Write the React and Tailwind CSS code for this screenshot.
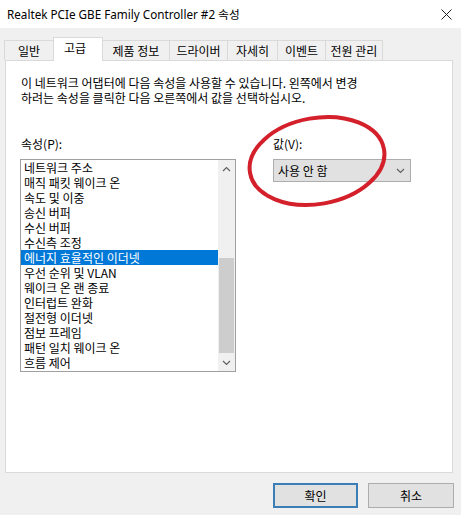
import React from "react";

const items = [
  "네트워크 주소",
  "매직 패킷 웨이크 온",
  "속도 및 이중",
  "송신 버퍼",
  "수신 버퍼",
  "수신측 조정",
  "에너지 효율적인 이더넷",
  "우선 순위 및 VLAN",
  "웨이크 온 랜 종료",
  "인터럽트 완화",
  "절전형 이더넷",
  "점보 프레임",
  "패턴 일치 웨이크 온",
  "흐름 제어",
];

function Chevron({ down }) {
  return (
    <svg width="9" height="6" viewBox="0 0 9 6">
      <polyline
        points={down ? "1,1 4.5,4.5 8,1" : "1,5 4.5,1.5 8,5"}
        fill="none"
        stroke="#606060"
        strokeWidth="1.2"
      />
    </svg>
  );
}

export default function App() {
  return (
    <div className="relative w-[461px] h-[515px] overflow-hidden bg-[#f0f0f0] text-black font-['Noto_Sans_CJK_KR',sans-serif] text-[12px]">
      {/* Title bar */}
      <div className="h-[28px] bg-white flex items-center justify-between pl-[7px] pr-[9px]">
        <span className="font-['Noto_Sans','Noto_Sans_CJK_KR',sans-serif] text-[11.7px] leading-[15px]">
          Realtek PCIe GBE Family Controller #2 속성
        </span>
        <svg width="11" height="11" viewBox="0 0 11 11">
          <path d="M0.5 0.5 L10.5 10.5 M10.5 0.5 L0.5 10.5" stroke="#222" strokeWidth="1" />
        </svg>
      </div>

      {/* Tabs */}
      <div className="mt-[9px] h-[23px] flex items-end pl-[4px]">
        <div className="w-[49px] h-[20px] flex items-center justify-center border-t border-l border-[#d9d9d9] leading-[15px]">일반</div>
        <div className="relative z-10 -mb-px w-[50px] h-[24px] flex items-start pt-[2px] justify-center bg-white border-t border-l border-r border-[#d9d9d9] leading-[15px] pr-[6px]">고급</div>
        <div className="w-[66px] h-[20px] flex items-center justify-center border-t border-[#d9d9d9] leading-[15px]">제품 정보</div>
        <div className="w-[58px] h-[20px] flex items-center justify-center border-t border-l border-[#d9d9d9] leading-[15px]">드라이버</div>
        <div className="w-[50px] h-[20px] flex items-center justify-center border-t border-l border-[#d9d9d9] leading-[15px]">자세히</div>
        <div className="w-[48px] h-[20px] flex items-center justify-center border-t border-l border-[#d9d9d9] leading-[15px]">이벤트</div>
        <div className="w-[58px] h-[20px] flex items-center justify-center border-t border-l border-r border-[#d9d9d9] leading-[15px]">전원 관리</div>
      </div>

      {/* Panel */}
      <div className="ml-[5px] w-[448px] h-[413px] bg-white border border-[#d9d9d9] pl-[14px] pt-[14px]">
        <div className="ml-px leading-[15px]">
          <div>이 네트워크 어댑터에 다음 속성을 사용할 수 있습니다. 왼쪽에서 변경</div>
          <div>하려는 속성을 클릭한 다음 오른쪽에서 값을 선택하십시오.</div>
        </div>

        <div className="mt-[31px] flex gap-[37px]">
          {/* Left column */}
          <div className="w-[216px]">
            <div className="ml-px leading-[15px] h-[15px]">속성(P):</div>
            <div className="mt-[8px] w-[216px] h-[213px] border border-[#a0a0a0] flex">
              <div className="w-[197px] flex flex-col">
                {items.map((it, i) => (
                  <div
                    key={it}
                    className={
                      i === 6
                        ? "h-[15px] leading-[15px] pl-[3px] bg-[#0078d7] text-white whitespace-nowrap"
                        : "h-[15px] leading-[15px] pl-[3px] whitespace-nowrap"
                    }
                  >
                    {it}
                  </div>
                ))}
              </div>
              <div className="w-[17px] bg-[#f0f0f0] flex flex-col">
                <div className="h-[17px] flex items-center justify-center">
                  <Chevron />
                </div>
                <div className="flex-1 flex flex-col">
                  <div className="h-[81px]" />
                  <div className="h-[95px] mx-[1px] bg-[#cdcdcd]" />
                </div>
                <div className="h-[17px] flex items-center justify-center">
                  <Chevron down />
                </div>
              </div>
            </div>
          </div>

          {/* Right column */}
          <div className="w-[138px]">
            <div className="leading-[15px] h-[15px]">값(V):</div>
            <div className="mt-[8px] w-[138px] h-[23px] bg-[#e1e1e1] border border-[#adadad] flex items-center justify-between pl-[4px] pr-[5px]">
              <span className="leading-[15px]">사용 안 함</span>
              <Chevron down />
            </div>
          </div>
        </div>
      </div>

      {/* Buttons */}
      <div className="mt-[10px] flex justify-end gap-[10px] pr-[7px]">
        <div className="w-[85px] h-[25px] bg-[#e1e1e1] border-2 border-[#3a7eb5] flex items-center justify-center leading-[15px]">확인</div>
        <div className="w-[86px] h-[25px] bg-[#e1e1e1] border border-[#adadad] flex items-center justify-center leading-[15px]">취소</div>
      </div>

      {/* Red hand-drawn ellipse overlay */}
      <svg className="absolute left-0 top-0 pointer-events-none" width="461" height="515" viewBox="0 0 461 515">
        <ellipse
          cx="317"
          cy="161"
          rx="68"
          ry="43"
          transform="rotate(-10 317 161)"
          fill="none"
          stroke="#d3202a"
          strokeWidth="4"
        />
      </svg>
    </div>
  );
}
